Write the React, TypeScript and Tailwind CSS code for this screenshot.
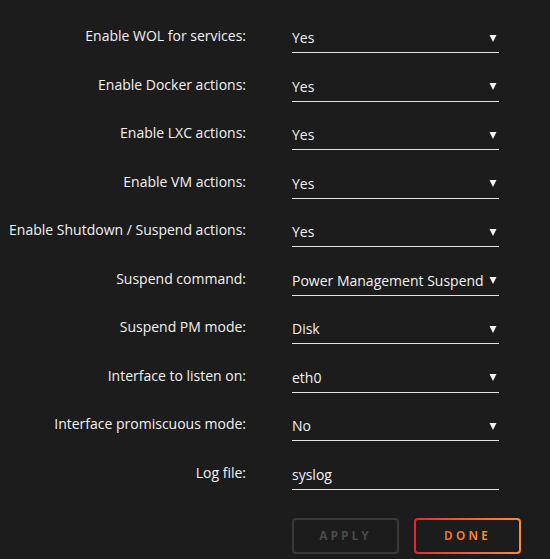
import { useState } from 'react';

type Setting = {
    label: string;
    value: string;
    options?: string[];
};

const settings: Setting[] = [
    { label: 'Enable WOL for services:', value: 'Yes', options: ['Yes', 'No'] },
    { label: 'Enable Docker actions:', value: 'Yes', options: ['Yes', 'No'] },
    { label: 'Enable LXC actions:', value: 'Yes', options: ['Yes', 'No'] },
    { label: 'Enable VM actions:', value: 'Yes', options: ['Yes', 'No'] },
    { label: 'Enable Shutdown / Suspend actions:', value: 'Yes', options: ['Yes', 'No'] },
    { label: 'Suspend command:', value: 'Power Management Suspend', options: ['Power Management Suspend'] },
    { label: 'Suspend PM mode:', value: 'Disk', options: ['Disk', 'RAM'] },
    { label: 'Interface to listen on:', value: 'eth0', options: ['eth0'] },
    { label: 'Interface promiscuous mode:', value: 'No', options: ['Yes', 'No'] },
    { label: 'Log file:', value: 'syslog' },
];

function Arrow() {
    return (
        <svg width="8" height="8" viewBox="0 0 8 8" className="shrink-0">
            <path d="M0.5 1 L7.5 1 L4 8 Z" fill="#f2f2f2" />
        </svg>
    );
}

export default function App() {
    const [values, setValues] = useState(settings.map((s) => s.value));

    return (
        <div className="min-h-screen w-full bg-[#1c1c1c] pt-[13px] font-['Open_Sans',sans-serif] text-[#f2f2f2]">
            {settings.map((setting, i) => (
                <div key={setting.label} className="flex h-[48.5px] items-center">
                    <div className="mb-[2px] w-[246px] shrink-0 text-right text-[14px] leading-none">
                        {setting.label}
                    </div>
                    <div className="ml-[46px] flex h-[32px] w-[207px] items-center justify-between border-b border-[#e4e4e4] pr-[2px] pt-[2px] text-[14px]">
                        {setting.options ? (
                            <>
                                <span>{values[i]}</span>
                                <Arrow />
                            </>
                        ) : (
                            <input
                                type="text"
                                value={values[i]}
                                onChange={(e) => {
                                    const next = [...values];
                                    next[i] = e.target.value;
                                    setValues(next);
                                }}
                                className="w-full bg-transparent outline-none"
                            />
                        )}
                    </div>
                </div>
            ))}

            <div className="ml-[292px] mt-[20px] flex gap-[15px]">
                <button
                    disabled
                    className="flex h-[36px] w-[107px] items-center justify-center rounded-[4px] border-2 border-[#3a3a3a] text-[12px] font-bold tracking-[3px] text-[#4a4a4a]"
                >
                    APPLY
                </button>
                <div className="h-[36px] w-[107px] rounded-[4px] bg-gradient-to-r from-[#e22828] to-[#ff8c2f] p-[2px]">
                    <button className="flex h-full w-full items-center justify-center rounded-[2px] bg-[#1c1c1c]">
                        <span className="bg-gradient-to-r from-[#f06a2a] to-[#ff8c2f] bg-clip-text text-[12px] font-bold tracking-[3px] text-transparent">
                            DONE
                        </span>
                    </button>
                </div>
            </div>
        </div>
    );
}
